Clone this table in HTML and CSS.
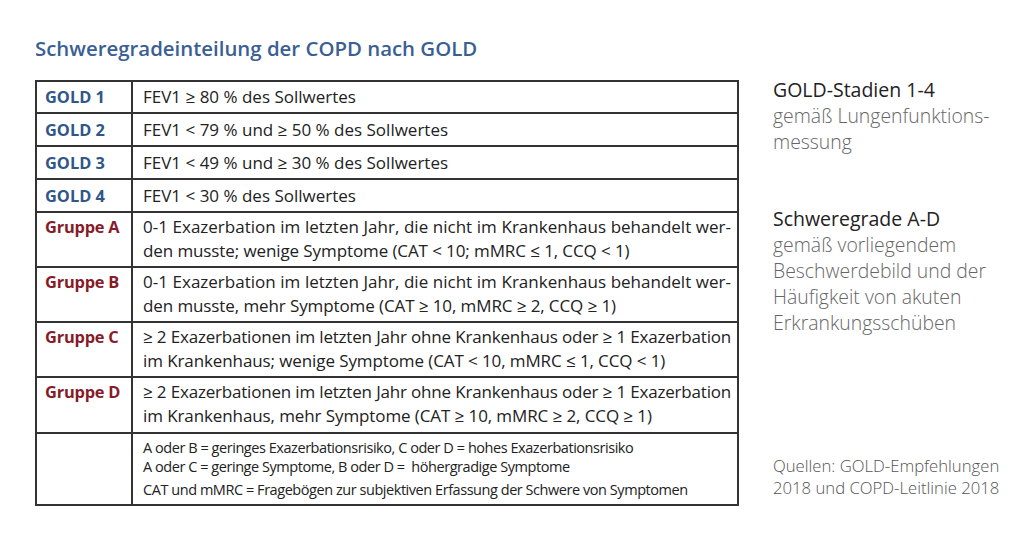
FILE: index.html
```html
<!DOCTYPE html>
<html lang="de">
<head>
<meta charset="utf-8">
<title>Schweregradeinteilung der COPD nach GOLD</title>
<link rel="stylesheet" href="styles.css">
</head>
<body>
<div class="page">
  <div class="main">
    <h1 class="title">Schweregradeinteilung der COPD nach GOLD</h1>
    <table class="grid">
      <tr class="r-s r-first"><th class="gold">GOLD 1</th><td>FEV1 ≥ 80 % des Sollwertes</td></tr>
      <tr class="r-s"><th class="gold">GOLD 2</th><td>FEV1 &lt; 79 % und ≥ 50 % des Sollwertes</td></tr>
      <tr class="r-s"><th class="gold">GOLD 3</th><td>FEV1 &lt; 49 % und ≥ 30 % des Sollwertes</td></tr>
      <tr class="r-s"><th class="gold">GOLD 4</th><td>FEV1 &lt; 30 % des Sollwertes</td></tr>
      <tr class="r-m"><th class="grp">Gruppe A</th><td><span class="ln j">0-1 Exazerbation im letzten Jahr, die nicht im Krankenhaus behandelt wer-</span><span class="ln last">den musste; wenige Symptome (CAT &lt; 10; mMRC ≤ 1, CCQ &lt; 1)</span></td></tr>
      <tr class="r-m"><th class="grp">Gruppe B</th><td><span class="ln j">0-1 Exazerbation im letzten Jahr, die nicht im Krankenhaus behandelt wer-</span><span class="ln last">den musste, mehr Symptome (CAT ≥ 10, mMRC ≥ 2, CCQ ≥ 1)</span></td></tr>
      <tr class="r-m"><th class="grp">Gruppe C</th><td><span class="ln j tight">≥ 2 Exazerbationen im letzten Jahr ohne Krankenhaus oder ≥ 1 Exazerbation</span><span class="ln last">im Krankenhaus; wenige Symptome (CAT &lt; 10, mMRC ≤ 1, CCQ &lt; 1)</span></td></tr>
      <tr class="r-m r-d"><th class="grp">Gruppe D</th><td><span class="ln j tight">≥ 2 Exazerbationen im letzten Jahr ohne Krankenhaus oder ≥ 1 Exazerbation</span><span class="ln last">im Krankenhaus, mehr Symptome (CAT ≥ 10, mMRC ≥ 2, CCQ ≥ 1)</span></td></tr>
      <tr class="r-n"><th></th><td class="notes"><span class="nl">A oder B = geringes Exazerbationsrisiko, C oder D = hohes Exazerbationsrisiko</span><span class="nl">A oder C = geringe Symptome, B oder D =&nbsp; höhergradige Symptome</span><span class="nl nl-gap">CAT und mMRC = Fragebögen zur subjektiven Erfassung der Schwere von Symptomen</span></td></tr>
    </table>
  </div>
  <aside class="side">
    <div class="block">
      <div class="head">GOLD-Stadien 1-4</div>
      <div class="sub">gemäß Lungenfunktions-<br>messung</div>
    </div>
    <div class="block block2">
      <div class="head">Schweregrade A-D</div>
      <div class="sub">gemäß vorliegendem<br>Beschwerdebild und der<br>Häufigkeit von akuten<br>Erkrankungsschüben</div>
    </div>
    <div class="src">Quellen: GOLD-Empfehlungen<br>2018 und COPD-Leitlinie 2018</div>
  </aside>
</div>
</body>
</html>
```

FILE: styles.css
```css
html, body {
  margin: 0;
  padding: 0;
  background: #ffffff;
}
body {
  font-family: "Open Sans", "Noto Sans", sans-serif;
  color: #222222;
  width: 1024px;
  height: 536px;
  overflow: hidden;
}
.page {
  display: flex;
  padding: 35px 0 0 35px;
}
.main {
  width: 704px;
  flex: none;
}
.title {
  margin: 0 0 18px 0;
  font-size: 20.4px;
  line-height: 27px;
  font-weight: 600;
  color: #3a5f92;
  letter-spacing: 0;
}
.grid {
  border-collapse: collapse;
  width: 704px;
  table-layout: fixed;
}
.grid th, .grid td {
  border: 2px solid #333333;
  padding: 0 6px 0 10px;
  text-align: left;
  vertical-align: middle;
  font-size: 17px;
  line-height: 24px;
  white-space: nowrap;
}
.grid th {
  width: 80px;
  font-weight: 700;
  font-size: 16.4px;
  padding-left: 8px;
}
.grid td {
  color: #222222;
  letter-spacing: 0;
}
.gold { color: #2f5788; }
.grp { color: #861c2a; letter-spacing: -0.2px; }
.r-s { height: 33px; }
.r-first { height: 32px; }
.r-m { height: 55px; }
.r-m th, .r-m td { vertical-align: top; padding-top: 2px; }
.r-d { height: 56px; }
.r-n { height: 72px; }
.r-n td { vertical-align: top; padding-top: 4px; }
.ln { display: block; }
.ln.j {
  white-space: normal;
  text-align: justify;
  text-align-last: justify;
}
.ln.tight { letter-spacing: -0.2px; }
.ln.last { letter-spacing: -0.1px; }
.notes {
  font-size: 14.5px !important;
  letter-spacing: -0.45px !important;
  color: #222222;
}
.nl {
  display: block;
  line-height: 19px;
}
.nl-gap { margin-top: 4px; }
.side {
  padding: 42px 0 0 34px;
  display: flex;
  flex-direction: column;
  width: 260px;
}
.head {
  font-size: 19.5px;
  line-height: 26px;
  font-weight: 500;
  color: #222222;
}
.sub {
  font-size: 19.4px;
  line-height: 26px;
  font-weight: 300;
  color: #666666;
}
.block2 { margin-top: 51px; }
.src {
  margin-top: 119px;
  font-size: 16.7px;
  line-height: 22px;
  font-weight: 300;
  color: #555555;
}
```
